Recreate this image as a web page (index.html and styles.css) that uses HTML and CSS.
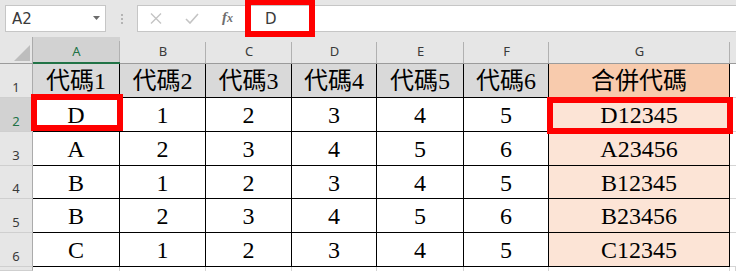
FILE: index.html
```html
<!DOCTYPE html>
<html lang="zh-Hant">
<head>
<meta charset="utf-8">
<title>合併代碼</title>
<link rel="stylesheet" href="styles.css">
</head>
<body>
<div class="app">
  <div class="toolbar">
    <div class="namebox">
      <span class="name">A2</span>
      <svg class="caret" width="7" height="4" viewBox="0 0 7 4"><polygon points="0,0 7,0 3.5,4" fill="#6b6b6b"/></svg>
    </div>
    <div class="grip"><i></i><i></i><i></i></div>
    <div class="formula">
      <svg class="fbtn cancel" width="12" height="11" viewBox="0 0 12 11"><path d="M1 0.5 L11 10.5 M11 0.5 L1 10.5" stroke="#c4c4c4" stroke-width="1.4" fill="none"/></svg>
      <svg class="fbtn enter" width="14" height="11" viewBox="0 0 14 11"><path d="M1 6 L5 10 L13 1" stroke="#c4c4c4" stroke-width="1.6" fill="none"/></svg>
      <span class="fx"><span class="fx-f">f</span><span class="fx-x">x</span></span>
      <span class="ftext">D</span>
    </div>
  </div>

  <div class="sheet">
    <div class="corner"><svg width="16" height="16" viewBox="0 0 16 16"><polygon points="16,0 16,16 0,16" fill="#bdbdbd"/></svg></div>
    <div class="colhead active">A</div>
    <div class="colhead">B</div>
    <div class="colhead">C</div>
    <div class="colhead">D</div>
    <div class="colhead">E</div>
    <div class="colhead">F</div>
    <div class="colhead">G</div>
    <div class="colhead rest"></div>

    <div class="rowhead">1</div>
    <div class="cell head">代碼1</div>
    <div class="cell head">代碼2</div>
    <div class="cell head">代碼3</div>
    <div class="cell head">代碼4</div>
    <div class="cell head">代碼5</div>
    <div class="cell head">代碼6</div>
    <div class="cell head merged">合併代碼</div>
    <div class="cell blank"></div>

    <div class="rowhead active">2</div>
    <div class="cell">D</div>
    <div class="cell">1</div>
    <div class="cell">2</div>
    <div class="cell">3</div>
    <div class="cell">4</div>
    <div class="cell">5</div>
    <div class="cell merged">D12345</div>
    <div class="cell blank"></div>

    <div class="rowhead">3</div>
    <div class="cell">A</div>
    <div class="cell">2</div>
    <div class="cell">3</div>
    <div class="cell">4</div>
    <div class="cell">5</div>
    <div class="cell">6</div>
    <div class="cell merged">A23456</div>
    <div class="cell blank"></div>

    <div class="rowhead">4</div>
    <div class="cell">B</div>
    <div class="cell">1</div>
    <div class="cell">2</div>
    <div class="cell">3</div>
    <div class="cell">4</div>
    <div class="cell">5</div>
    <div class="cell merged">B12345</div>
    <div class="cell blank"></div>

    <div class="rowhead">5</div>
    <div class="cell">B</div>
    <div class="cell">2</div>
    <div class="cell">3</div>
    <div class="cell">4</div>
    <div class="cell">5</div>
    <div class="cell">6</div>
    <div class="cell merged">B23456</div>
    <div class="cell blank"></div>

    <div class="rowhead">6</div>
    <div class="cell">C</div>
    <div class="cell">1</div>
    <div class="cell">2</div>
    <div class="cell">3</div>
    <div class="cell">4</div>
    <div class="cell">5</div>
    <div class="cell merged">C12345</div>
    <div class="cell blank"></div>

    <div class="rowhead"></div>
    <div class="cell empty"></div>
    <div class="cell empty"></div>
    <div class="cell empty"></div>
    <div class="cell empty"></div>
    <div class="cell empty"></div>
    <div class="cell empty"></div>
    <div class="cell empty"></div>
    <div class="cell empty"></div>
  </div>

  <div class="mark mark-formula"></div>
  <div class="mark mark-a2"></div>
  <div class="mark mark-g2"></div>
</div>
</body>
</html>
```

FILE: styles.css
```css
* { box-sizing: border-box; }

html, body {
  margin: 0;
  padding: 0;
  background: #e6e6e6;
}

.app {
  position: relative;
  width: 736px;
  height: 271px;
  overflow: hidden;
  font-family: "Noto Sans", "Open Sans", sans-serif;
}

/* name box + formula bar */
.toolbar {
  display: flex;
  height: 37px;
  padding: 5px 0 5px 5px;
}

.namebox {
  width: 101px;
  height: 27px;
  background: #fff;
  border: 1px solid #c6c6c6;
  display: flex;
  align-items: center;
  justify-content: space-between;
  padding: 0 5px 0 6px;
}

.name,
.ftext {
  font-family: "DejaVu Sans", sans-serif;
  font-size: 15px;
  color: #3a3a3a;
}

.caret { margin-top: -2px; }

.grip {
  width: 31px;
  display: flex;
  flex-direction: column;
  align-items: center;
  justify-content: center;
  gap: 2px;
}
.grip i {
  display: block;
  width: 2px;
  height: 2px;
  background: #b4b4b4;
}

.formula {
  flex: 1;
  height: 27px;
  background: #fff;
  border: 1px solid #c6c6c6;
  border-right: none;
  display: flex;
  align-items: center;
  padding-left: 12px;
}

.fbtn.cancel { margin-right: 23px; }
.fbtn.enter { margin-right: 23px; }

.fx {
  font-family: "Liberation Serif", serif;
  font-style: italic;
  color: #6f6f6f;
  font-size: 15px;
  font-weight: bold;
  width: 43px;
  margin-top: -2px;
}
.fx-x { font-size: 12px; }

/* worksheet grid */
.sheet {
  display: grid;
  grid-template-columns: 33px 87px 86px 86px 85px 87px 85px 181px 1fr;
  grid-template-rows: 27px 34px 34px 34px 33px 34px 34px 1fr;
  height: 234px;
}

.corner {
  background: #e6e6e6;
  border-right: 1px solid #ababab;
  border-bottom: 1px solid #9b9b9b;
  display: flex;
  align-items: flex-end;
  justify-content: flex-end;
  padding: 0 2px 2px 0;
}

.colhead {
  background: #e6e6e6 linear-gradient(#b1b1b1, #b1b1b1) right bottom / 1px 21px no-repeat;
  border-bottom: 1px solid #9b9b9b;
  display: flex;
  align-items: center;
  justify-content: center;
  font-size: 13px;
  color: #3a3a3a;
  padding-top: 1px;
}
.colhead.active {
  background-color: #d2d2d2;
  border-bottom: 2px solid #217346;
  color: #217346;
  padding-top: 2px;
}
.colhead.rest { background-image: none; }

.rowhead {
  background: #e6e6e6;
  border-right: 1px solid #ababab;
  border-bottom: 1px solid #cfcfcf;
  display: flex;
  align-items: flex-end;
  justify-content: center;
  padding-bottom: 2px;
  font-size: 13px;
  line-height: 15px;
  color: #3a3a3a;
}
.rowhead.active {
  background: #d2d2d2;
  color: #217346;
}

.cell {
  background: #fff;
  border-right: 1px solid #000;
  border-bottom: 1px solid #000;
  display: flex;
  align-items: center;
  justify-content: center;
  font-family: "Liberation Serif", "Noto Sans CJK TC", serif;
  font-size: 24px;
  color: #000;
  line-height: 1;
  padding-top: 1px;
}
.cell.head { background: #d9d9d9; }
.cell.merged { background: #fce4d6; }
.cell.head.merged { background: #f8cbad; }
.cell.blank { border-right: none; border-bottom-color: #d4d4d4; }
.cell.empty { border-right-color: #d4d4d4; border-bottom: none; }

/* red highlight frames */
.mark {
  position: absolute;
  border: 6px solid #ff0000;
}
.mark-formula { left: 245px; top: -1px; width: 70px; height: 38px; }
.mark-a2 { left: 31px; top: 94px; width: 92px; height: 37px; }
.mark-g2 { left: 547px; top: 97px; width: 186px; height: 37px; }
```
